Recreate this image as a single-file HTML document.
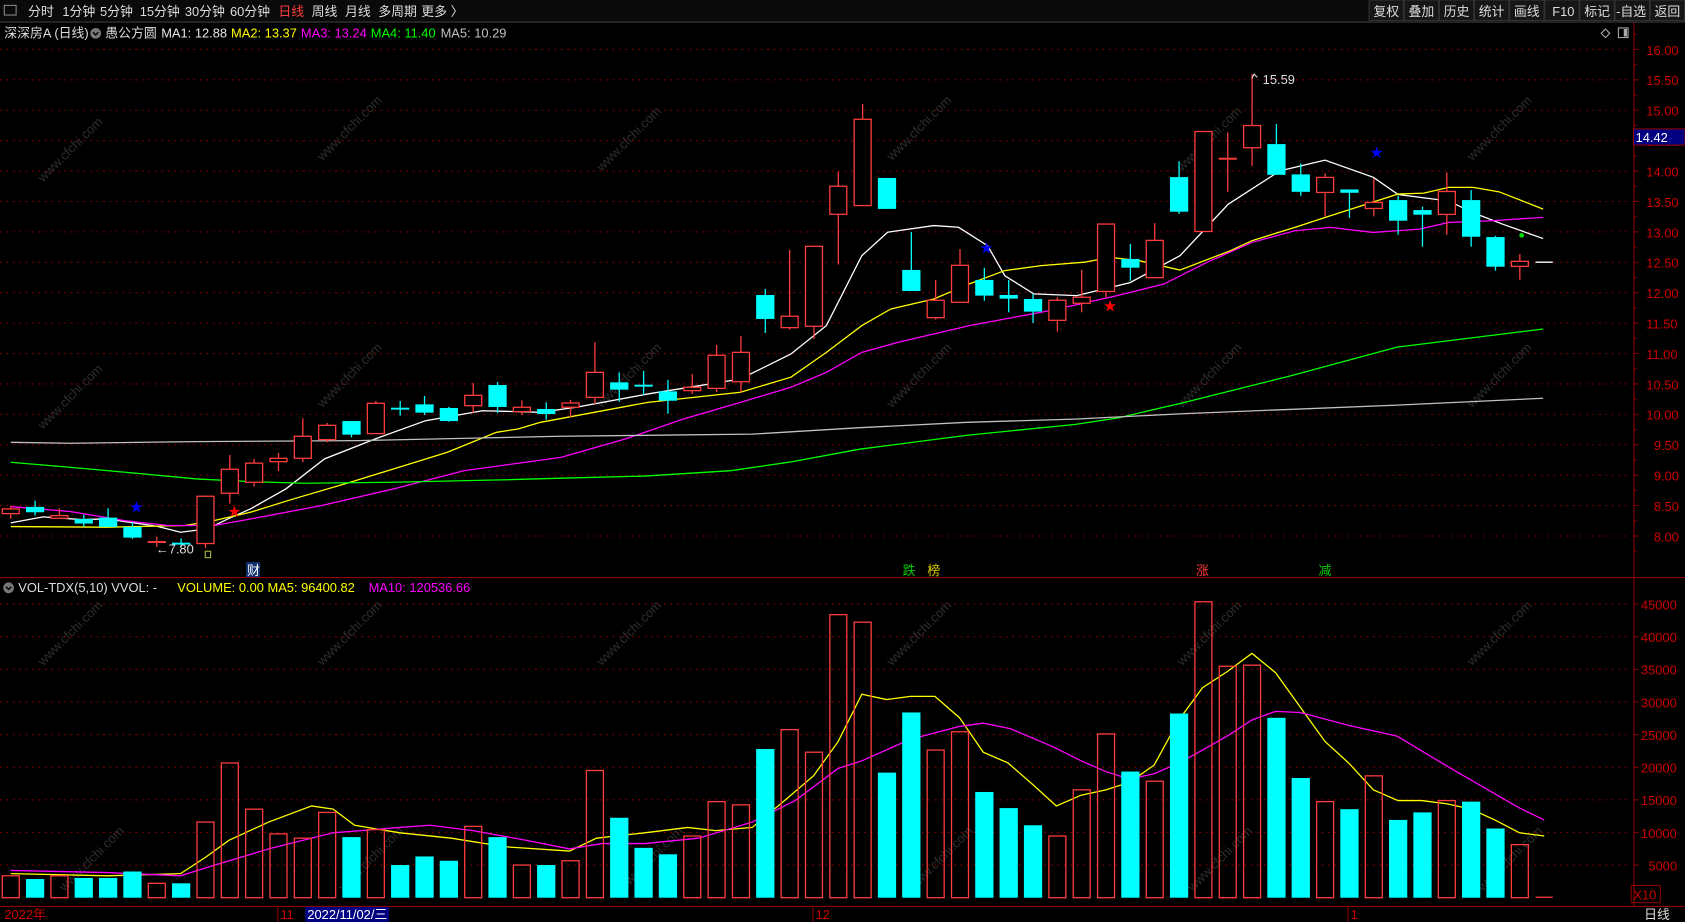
<!DOCTYPE html>
<html><head><meta charset="utf-8">
<style>
html,body{margin:0;padding:0;background:#000;overflow:hidden}
svg{display:block}
text{font-family:"Liberation Sans","Noto Sans CJK SC",sans-serif;font-size:12px}
</style></head>
<body>
<svg id="s" xmlns="http://www.w3.org/2000/svg" width="1685" height="922" viewBox="0 0 1568 858" preserveAspectRatio="none">
<rect x="0" y="0" width="1568" height="858" fill="#000"/>
<g id="wm" fill="#2e2e2e" font-size="24"></g>
<g id="grid"></g>
<g id="lines"></g>
<g id="cand"></g>
<rect x="0" y="0" width="1568" height="20" fill="#0a0a0a"/>
<line x1="0" y1="20.5" x2="1568" y2="20.5" stroke="#3a3a3a"/>
<rect x="4" y="5" width="11" height="9" fill="none" stroke="#888"/>
<g fill="#ddd">
<text x="26" y="15">分时</text><text x="58" y="15">1分钟</text><text x="93" y="15">5分钟</text><text x="130" y="15">15分钟</text><text x="172" y="15">30分钟</text><text x="214" y="15">60分钟</text>
<text x="259" y="15" fill="#ff3c3c">日线</text><text x="290" y="15">周线</text><text x="321" y="15">月线</text><text x="352" y="15">多周期</text><text x="392" y="15">更多 〉</text>
</g>
<g id="btns"></g>
<text x="4" y="35" fill="#ddd">深深房A (日线)</text>
<circle cx="89" cy="31" r="5" fill="#777"/><path d="M86.5 30l2.5 2.5 2.5-2.5" stroke="#000" stroke-width="1.3" fill="none"/>
<text x="98" y="35" fill="#ddd">愚公方圆</text>
<text x="150" y="35" fill="#e6e6e6">MA1: 12.88</text>
<text x="215" y="35" fill="#ffff00">MA2: 13.37</text>
<text x="280" y="35" fill="#ff00ff">MA3: 13.24</text>
<text x="345" y="35" fill="#00ff00">MA4: 11.40</text>
<text x="410" y="35" fill="#c0c0c0">MA5: 10.29</text>
<path d="M1490 31l4-4 4 4-4 4z" fill="none" stroke="#aaa"/>
<rect x="1506" y="26" width="9" height="9" fill="none" stroke="#aaa"/><rect x="1511" y="27" width="3" height="7" fill="#aaa"/>
<line x1="1520.5" y1="21" x2="1520.5" y2="843" stroke="#8b0000"/>
<line x1="0" y1="537.5" x2="1568" y2="537.5" stroke="#8b0000"/>
<line x1="0" y1="843.5" x2="1568" y2="843.5" stroke="#8b0000"/>
<g id="axis" fill="#cc0000" font-size="13"></g>
<rect x="1520" y="120" width="48" height="15" fill="#000080" stroke="#8b0000"/>
<text x="1522" y="132" fill="#fff" font-size="13">14.42</text>
<rect x="1518" y="824" width="27" height="16" fill="none" stroke="#8b0000"/>
<text x="1520" y="837" fill="#cc0000" font-size="13">X10</text>
<circle cx="8" cy="547" r="5" fill="#777"/><path d="M5.5 546l2.5 2.5 2.5-2.5" stroke="#000" stroke-width="1.3" fill="none"/>
<text x="17" y="551" fill="#ddd">VOL-TDX(5,10)  VVOL: -</text>
<text x="165" y="551" fill="#ffff00">VOLUME: 0.00  MA5: 96400.82</text>
<text x="343" y="551" fill="#ff00ff">MA10: 120536.66</text>
<text x="121" y="476" fill="#0000ff" font-size="11">★</text>
<text x="912" y="235" fill="#0000ff" font-size="11">★</text>
<text x="1275" y="146" fill="#0000ff" font-size="11">★</text>
<text x="212" y="480" fill="#ff0000" font-size="11">★</text>
<text x="1027" y="289" fill="#ff0000" font-size="11">★</text>
<circle cx="1416" cy="219" r="2.2" fill="#00dd00"/>
<text x="145" y="515" fill="#ddd" font-size="11">←7.80</text>
<path d="M1165 73l2-4 3 3" stroke="#ddd" fill="none"/><text x="1175" y="78" fill="#ddd" font-size="11">15.59</text>
<rect x="191" y="513" width="5" height="6" fill="none" stroke="#aabb44"/>
<rect x="229" y="523" width="13" height="14" fill="#103070"/>
<text x="230" y="535" fill="#fff" font-size="11">财</text>
<text x="840" y="535" fill="#00cc00" font-size="11">跌</text>
<text x="863" y="535" fill="#ddcc00" font-size="11">榜</text>
<text x="1113" y="535" fill="#ff3c3c" font-size="11">涨</text>
<text x="1227" y="535" fill="#00cc00" font-size="11">减</text>
<text x="4" y="855" fill="#cc0000">2022年</text>
<line x1="258.5" y1="843" x2="258.5" y2="858" stroke="#8b0000"/><text x="261" y="855" fill="#cc0000">11</text>
<rect x="284" y="844" width="78" height="14" fill="#000080"/><text x="286" y="855" fill="#fff">2022/11/02/三</text>
<line x1="756.5" y1="843" x2="756.5" y2="858" stroke="#8b0000"/><text x="759" y="855" fill="#cc0000">12</text>
<line x1="1254.5" y1="843" x2="1254.5" y2="858" stroke="#8b0000"/><text x="1257" y="855" fill="#cc0000">1</text>
<text x="1530" y="855" fill="#ddd">日线</text>
</svg>
<script>
var NS="http://www.w3.org/2000/svg";
function el(p,t,a){var e=document.createElementNS(NS,t);for(var k in a)e.setAttribute(k,a[k]);document.getElementById(p).appendChild(e);return e;}
var bl=["复权","叠加","历史","统计","画线","F10","标记","-自选","返回"];
for(var i=0;i<bl.length;i++){var x=1274+i*32.7;el("btns","rect",{x:x,y:0,width:32,height:19,fill:"#161616",stroke:"#333"});var t=el("btns","text",{x:x+(bl[i]=="F10"?7:(bl[i]=="-自选"?1:4)),y:15,fill:"#ddd"});t.textContent=bl[i];}
var wp=[[40,170],[300,150],[560,160],[830,150],[1100,160],[1370,150],[40,400],[300,380],[560,380],[830,380],[1100,380],[1370,380],[40,620],[300,620],[560,620],[830,620],[1100,620],[1370,620],[60,830],[320,830],[580,830],[850,830],[1110,830],[1380,830]];
wp.forEach(function(p){var t=el("wm","text",{x:p[0],y:p[1],transform:"rotate(-45 "+p[0]+" "+p[1]+")","font-size":"24"});t.textContent="www.cfchi.com";});
for(var k=0;k<=16;k++){var y=46+k*28.3;el("grid","line",{x1:0,y1:y,x2:1518,y2:y,stroke:"#8b0000","stroke-dasharray":"1.5 4.5"});
 var p=(16-k*0.5).toFixed(2);var t=el("axis","text",{x:p.length>4?1532:1539,y:y+5});t.textContent=p;
 el("grid","line",{x1:1520,y1:y,x2:1525,y2:y,stroke:"#8b0000"});el("grid","line",{x1:1520,y1:y+14.15,x2:1523,y2:y+14.15,stroke:"#8b0000"});}
el("grid","line",{x1:1520,y1:46-14.15,x2:1523,y2:46-14.15,stroke:"#8b0000"});
for(var v=45000;v>=5000;v-=5000){var y=835.4-(v/5000)*30.36;el("grid","line",{x1:0,y1:y,x2:1518,y2:y,stroke:"#8b0000","stroke-dasharray":"1.5 4.5"});
 var s=""+v;var t=el("axis","text",{x:s.length>4?1527:1534,y:y+5});t.textContent=s;el("grid","line",{x1:1520,y1:y,x2:1525,y2:y,stroke:"#8b0000"});}
var C=[[473.6,478,470.5,483,1],[471.7,476.7,466,479.8,0],[479.8,482.3,473,483,1],[483,487.2,479,490.3,0],[481.7,490.3,473,490.3,0],[490.3,500.3,486,501.5,0],[503.5,505,499.6,509,1],[505,506.5,501,509,0],[461.8,505.8,461.8,510,1],[436.7,459,423.4,468.6,1],[431,448.8,427,452.8,1],[426.5,429.6,421.5,438.3,1],[406,426.5,389.3,430.2,1],[395.8,409.1,393.6,411.6,1],[391.8,404.5,391.8,407,0],[375.3,403.5,373,403.5,1],[379.4,381.2,373.2,386.8,0],[376.3,384,368.5,386.2,0],[379.7,391.8,378.7,392.5,0],[367.9,377.5,356.4,384.3,1],[358.3,378.7,355.5,384.3,0],[379,383,372.5,386.2,1],[380.6,385.3,374.4,390.5,0],[375,379,372,388.4,1],[346.5,369.8,318.5,376,1],[355.8,362.6,346.5,373.8,0],[358,359.5,345.2,367.6,0],[364.2,372.9,353.6,385,0],[360.4,363.5,348,366.6,1],[330.6,361.4,321,365,1],[327.9,355.2,312.6,365,1],[274.5,296.8,268.9,309.9,0],[294.3,304.9,232.6,306.8,1],[229.2,303.6,229.2,315.4,1],[173.3,199.4,159.7,246.2,1],[111,191.3,96.7,191.3,1],[165.6,194.4,165.6,194.4,0],[251.2,270.8,215.8,270.8,0],[279.4,295.6,260.5,297.4,1],[246.9,281.3,231.7,281.3,1],[260.5,275.1,249.3,279.8,0],[274.5,277.9,260.5,290.6,0],[278.2,290,273.5,300.5,0],[279.4,298.1,276.6,308.6,1],[276.6,282.2,251.2,290.6,1],[208.5,271.2,208.5,276.7,1],[241,249.1,227.1,261.2,0],[223.7,258.4,207.6,258.4,1],[164.8,197,150,199.2,0],[122.4,215.4,122.4,215.4,1],[146.8,148,123.3,178.5,1],[116.8,137.5,69,154.3,1],[134.1,162.7,115.5,162.7,0],[162.3,178.5,152.1,182.2,0],[165.1,179.1,161.4,201.4,1],[176.3,179.4,176.3,202.6,0],[188.4,194,166.1,201.4,1],[186.2,205.4,182.2,218.4,0],[195.5,199.8,192.4,229.6,0],[178.2,199.5,160.5,218.4,1],[186.2,220.3,176.9,229.6,0],[220.6,248.2,219.4,251.9,0],[243.2,247.9,236.4,260.3,1]];
var V=[815,818,815,817,817,811,822,822,765,710,753,776,780,756,779,772,805,797,801,769,779,805,805,801,717,761,789,795,778,746,749,697,679,700,572,579,719,663,698,681,737,752,768,778,735,683,718,727,664,560,620,619,668,724,746,753,722,763,756,745,746,771,786];
var R="#ff3c3c",CY="#00ffff",W=17;
for(var i=0;i<C.length;i++){var c=C[i],x=10+22.65*i,col=c[4]?R:CY;
 el("cand","line",{x1:x,y1:c[2],x2:x,y2:c[3],stroke:col,"stroke-width":1.2});
 var h=c[1]-c[0];
 if(h<2.5){el("cand","rect",{x:x-W/2,y:c[0],width:W,height:Math.max(h,1.8),fill:col});}
 else if(c[4]){el("cand","rect",{x:x-W/2+0.6,y:c[0],width:W-1.2,height:h,fill:"#000",stroke:col,"stroke-width":1.2});}
 else{el("cand","rect",{x:x-W/2,y:c[0],width:W,height:h,fill:col});}
 var vt=V[i];
 if(c[4])el("cand","rect",{x:x-W/2+0.6,y:vt,width:W-1.2,height:835.4-vt,fill:"none",stroke:col,"stroke-width":1.2});
 else el("cand","rect",{x:x-W/2,y:vt,width:W,height:835.4-vt,fill:col});
}
var xd=10+22.65*63;
el("cand","line",{x1:xd-8,y1:244,x2:xd+8,y2:244,stroke:"#fff","stroke-width":1.2});
el("cand","line",{x1:xd-8,y1:835,x2:xd+8,y2:835,stroke:R,"stroke-width":1.2});
function pl(pts,col){el("lines","polyline",{points:pts.map(function(p){return p.join(",")}).join(" "),fill:"none",stroke:col,"stroke-width":1.2});}
pl([[10,486.6],[40,481],[76,483.5],[99,482.9],[146,489.7],[168,495.3],[193,492.2],[212,482.9],[233,473.6],[266,455],[302,427],[349,408.5],[396,391.5],[449,382.2],[503,383.7],[536,379],[603,366.6],[689,352.7],[736,329.4],[769,303],[802,237.9],[826,216.1],[869,209.9],[892,211.5],[919,228.6],[935,256.5],[962,273.5],[1002,275.1],[1051.6,263],[1098,238],[1143,190],[1191,159],[1233,149],[1278,165],[1301,181],[1348,187],[1371,198],[1398,208.5],[1436,222]],"#ffffff");
pl([[10,490],[99,490.6],[172,489],[199,484.5],[233,476.7],[273,464.3],[326,448.8],[366,436.4],[416,421],[462,402.3],[482,399.2],[503,393],[603,374.4],[689,365],[736,351],[769,327.9],[802,303],[829,287.5],[869,278.2],[902,264.2],[935,251.8],[969,247.2],[1009,244],[1033,239.5],[1060,242.6],[1098,251.3],[1145,233.3],[1165,224],[1205,211.6],[1238,200.8],[1301,180.6],[1325,179.7],[1348,174.4],[1371,174.4],[1395,178.5],[1436,194.6]],"#ffff00");
pl([[10,471.4],[66,476.1],[116,484.5],[156,489],[199,489],[233,483],[299,470.5],[366,455],[432,438],[522,425.6],[583,408.2],[636,389.9],[689,374.4],[736,360.4],[769,346.5],[802,327.9],[836,318.5],[902,303],[969,290.6],[1005,282.9],[1039,275.2],[1083,264.3],[1123,244.2],[1165,225.6],[1205,214.7],[1238,211.6],[1278,216.3],[1321,213.2],[1348,207],[1388,205.4],[1436,202.3]],"#ff00ff");
pl([[10,430.2],[66,434.9],[133,441],[183,445.7],[233,448.2],[283,449.7],[366,448.8],[466,446.6],[522,445],[600,443],[680,438],[735,430],[800,418],[900,405],[1000,395],[1040,389],[1100,375],[1200,350],[1300,323],[1436,306.2]],"#00ff00");
pl([[10,411.6],[66,412.5],[180,411],[333,410],[522,406],[700,404],[800,398],[900,393],[1000,390],[1100,385],[1200,381],[1300,377],[1436,370.6]],"#c0c0c0");
pl([[10,813],[100,815],[168,813],[191,798],[213,782],[250,765],[290,750],[310,753],[330,768],[372,775],[420,780],[470,788],[530,792],[555,780],[600,775],[640,770],[666,773],[700,770],[730,745],[757,722],[780,690],[802,646],[825,651],[847,648],[870,648],[893,668],[915,700],[938,710],[961,730],[983,750],[1006,740],[1029,735],[1051,728],[1074,712],[1097,670],[1119,640],[1142,625],[1165,608],[1187,626],[1210,658],[1233,690],[1255,710],[1278,735],[1301,745],[1323,745],[1346,748],[1369,753],[1391,763],[1414,775],[1437,778]],"#ffff00");
pl([[10,810],[100,812],[168,815],[200,805],[250,790],[310,775],[372,770],[400,768],[440,773],[490,782],[530,790],[560,785],[600,785],[650,780],[700,765],[740,745],[780,715],[802,708],[847,688],[893,676],[915,673],[940,678],[980,695],[1006,708],[1029,718],[1051,725],[1074,720],[1097,710],[1119,698],[1142,685],[1165,670],[1187,662],[1210,663],[1255,675],[1300,685],[1350,715],[1414,752],[1437,763]],"#ff00ff");
</script>
</body></html>
